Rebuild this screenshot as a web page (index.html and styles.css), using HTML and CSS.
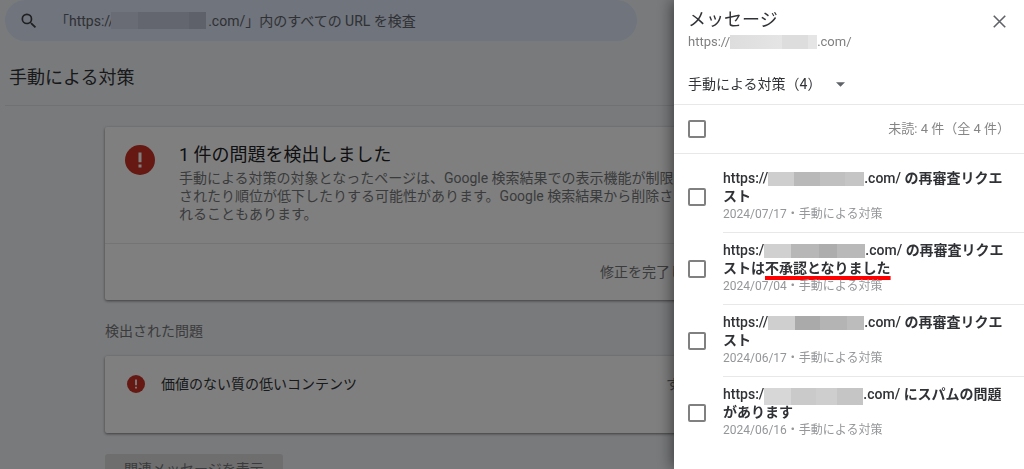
FILE: index.html
```html
<!DOCTYPE html>
<html lang="ja">
<head>
<meta charset="utf-8">
<meta name="viewport" content="width=device-width, initial-scale=1">
<title>手動による対策</title>
<link rel="stylesheet" href="styles.css">
</head>
<body>
<div class="page">
  <form class="search">
    <svg class="search-icon" viewBox="0 0 24 24" aria-hidden="true"><path d="M15.5 14h-.79l-.28-.27A6.47 6.47 0 0 0 16 9.5 6.5 6.5 0 1 0 9.500 16c1.610 0 3.090-.59 4.230-1.570l.27.28v.79l5 4.990L20.490 19zm-6 0a4.500 4.500 0 1 1 0-9 4.500 4.500 0 0 1 0 9z"/></svg>
    <input class="search-input" type="text" aria-label="URL を検査" placeholder="「https://&nbsp;&nbsp;&nbsp;&nbsp;&nbsp;&nbsp;&nbsp;&nbsp;&nbsp;&nbsp;&nbsp;&nbsp;&nbsp;&nbsp;&nbsp;&nbsp;&nbsp;&nbsp;&nbsp;&nbsp;&nbsp;&nbsp;&nbsp;&nbsp;&nbsp;&nbsp;&nbsp;.com/」内のすべての URL を検査">
    <span class="mask mask-search"></span>
  </form>
  <header class="page-head"><h1 class="page-title">手動による対策</h1></header>
  <main class="content">
    <section class="card">
      <div class="summary">
        <svg class="alert-lg" viewBox="0 0 20 20" aria-hidden="true"><circle class="alert-disc" cx="10" cy="10" r="10"/><path class="alert-mark" d="M9 5h2v6.500H9zM9 13h2v2H9z"/></svg>
        <div class="summary-text">
          <h2 class="summary-title">1 件の問題を検出しました</h2>
          <p class="summary-body">手動による対策の対象となったページは、Google 検索結果での表示機能が制限<br>されたり順位が低下したりする可能性があります。Google 検索結果から削除さ<br>れることもあります。</p>
        </div>
      </div>
      <div class="card-actions"><span>修正を完了し</span></div>
    </section>
    <h3 class="section-label">検出された問題</h3>
    <section class="card issue">
      <svg class="alert-sm" viewBox="0 0 20 20" aria-hidden="true"><circle class="alert-disc" cx="10" cy="10" r="10"/><path class="alert-mark" d="M9 5h2v6.500H9zM9 13h2v2H9z"/></svg>
      <span class="issue-name">価値のない質の低いコンテンツ</span>
      <span class="issue-scope">す</span>
    </section>
    <button class="related" type="button">関連メッセージを表示</button>
  </main>
</div>
<div class="scrim"></div>
<aside class="drawer" aria-label="メッセージ">
  <header class="drawer-head">
    <div>
      <h2 class="drawer-title">メッセージ</h2>
      <p class="drawer-url">https://<span class="mask mask-light"></span>.com/</p>
    </div>
    <button class="close" type="button" aria-label="閉じる"><svg class="close-icon" viewBox="0 0 12 12" aria-hidden="true"><path d="M.7.7l10.600 10.600M11.300.7L.7 11.300"/></svg></button>
  </header>
  <div class="filter">
    <select class="filter-select" aria-label="メッセージの種類"><option>手動による対策（4）</option></select>
    <svg class="caret" viewBox="0 0 10 5" aria-hidden="true"><path d="M0 0h10L5 5z"/></svg>
  </div>
  <div class="select-all">
    <input class="check" type="checkbox" aria-label="すべて選択">
    <span class="unread">未読: 4 件（全 4 件）</span>
  </div>
  <ul class="messages">
    <li class="message">
      <input class="check" type="checkbox" id="m1">
      <div class="message-body">
        <label class="message-title" for="m1">https://<span class="mask mask-a"></span>.com/ <b>の再審査リクエ<br>スト</b></label>
        <p class="meta">2024/07/17・手動による対策</p>
      </div>
    </li>
    <li class="message">
      <input class="check" type="checkbox" id="m2">
      <div class="message-body">
        <label class="message-title" for="m2">https:/<span class="mask mask-b"></span>.com/ <b>の再審査リクエ<br>ストは<span class="marked">不承認となりました</span></b></label>
        <p class="meta">2024/07/04・手動による対策</p>
      </div>
    </li>
    <li class="message">
      <input class="check" type="checkbox" id="m3">
      <div class="message-body">
        <label class="message-title" for="m3">https://<span class="mask mask-c"></span>.com/ <b>の再審査リクエ<br>スト</b></label>
        <p class="meta">2024/06/17・手動による対策</p>
      </div>
    </li>
    <li class="message">
      <input class="check" type="checkbox" id="m4">
      <div class="message-body">
        <label class="message-title" for="m4">https:/<span class="mask mask-d"></span>.com/ <b>にスパムの問題<br>があります</b></label>
        <p class="meta">2024/06/16・手動による対策</p>
      </div>
    </li>
  </ul>
</aside>
</body>
</html>
```

FILE: styles.css
```css
* { box-sizing: border-box; }
html, body { height: 100%; }
body {
  margin: 0;
  overflow: hidden;
  background: #f3f5f8;
  color: #303236;
  font: 14px/18px Roboto, "Noto Sans CJK JP", sans-serif;
}
h1, h2, h3, p, ul { margin: 0; padding: 0; font-weight: 400; }
button, input, select { font: inherit; color: inherit; }

.page { padding-left: 5px; white-space: nowrap; }
.search {
  position: relative;
  display: flex;
  align-items: center;
  gap: 16px;
  width: 62%;
  height: 41px;
  padding: 0 14px;
  border-radius: 21px;
  background: #e0e8fa;
}
.search-icon { flex: none; width: 20px; height: 20px; fill: #3c4043; }
.search-input { flex: 1; padding: 0; border: 0; outline: 0; background: none; }
.search-input::placeholder { color: #5f6368; opacity: 1; }
.page-head {
  padding: 24px 4px 14px;
  border-bottom: 1px solid #e0e2e5;
}
.page-title { font-size: 18px; line-height: 26px; }
.content { padding: 21px 320px 0 100px; }
.card {
  border-radius: 2px;
  background: #fff;
  box-shadow: 0 1px 3px rgba(0, 0, 0, .5);
}
.summary {
  display: flex;
  gap: 24px;
  padding: 14px 20px 20px;
  border-bottom: 1px solid #e8e8e8;
}
.alert-lg { flex: none; width: 30px; height: 30px; margin-top: 4px; }
.alert-sm { flex: none; width: 18px; height: 18px; }
.alert-disc { fill: #cb3325; }
.alert-mark { fill: #fff; }
.summary-title { font-size: 18px; line-height: 28px; color: #202124; }
.summary-body { color: #757779; }
.card-actions {
  display: flex;
  justify-content: flex-end;
  padding: 19px 20px;
  color: #757779;
}
.section-label {
  padding: 22px 0 16px;
  font-size: 14px;
  color: #757779;
}
.issue {
  display: flex;
  align-items: flex-start;
  gap: 16px;
  padding: 19px 24px 40px 22px;
}
.issue-scope { margin-left: auto; color: #757779; }
.related {
  margin-top: 21px;
  padding: 6px 19px;
  border: 0;
  border-radius: 3px;
  background: #dcdcdc;
  color: #757779;
}
.scrim { position: fixed; inset: 0; background: rgba(0, 0, 0, .5); }

.drawer {
  position: fixed;
  top: 0;
  right: 0;
  bottom: 0;
  width: 350px;
  background: #fff;
  box-shadow: -2px 0 14px rgba(0, 0, 0, .5);
}
.drawer-head {
  display: flex;
  justify-content: space-between;
  align-items: flex-start;
  padding: 7px 18px 0 14px;
}
.drawer-title { font-size: 18px; line-height: 26px; }
.drawer-url { font-size: 13px; color: #808080; }
.close { display: flex; padding: 8px 0; border: 0; background: none; }
.close-icon { width: 13px; height: 13px; fill: none; stroke: #5f6368; stroke-width: 1.5; }
.filter {
  display: flex;
  align-items: center;
  gap: 14px;
  padding: 24px 14px 11px;
  border-bottom: 1px solid #e8e8e8;
}
.filter-select {
  appearance: none;
  padding: 0;
  border: 0;
  background: none;
}
.caret { width: 9px; height: 5px; fill: #5f6368; }
.select-all {
  display: flex;
  align-items: center;
  justify-content: space-between;
  padding: 15px 14px;
  border-bottom: 1px solid #e8e8e8;
}
.unread { font-size: 13px; color: #858585; }
.check {
  appearance: none;
  flex: none;
  width: 18px;
  height: 18px;
  margin: 0;
  border: 2px solid #808080;
  border-radius: 2px;
  background: #fff;
}
.messages { padding-top: 7px; list-style: none; }
.message {
  display: flex;
  align-items: center;
  gap: 17px;
  padding-left: 14px;
}
.message-body {
  flex: 1;
  padding: 8px 0 9px;
  border-bottom: 1px solid #e8e8e8;
  white-space: nowrap;
}
.message:last-child .message-body { border-color: transparent; }
.message-title { display: block; font-weight: 500; }
.meta { font-size: 12px; color: #949699; }
.marked {
  text-decoration: underline 4px #f00;
  text-underline-offset: 3px;
  text-decoration-skip-ink: none;
}

.mask { display: inline-block; height: 14px; vertical-align: -3px; }
.mask-search {
  position: absolute;
  left: 106px;
  top: 12px;
  width: 95px;
  height: 17px;
  background: linear-gradient(90deg, #d2d9e9 28%, #c6cddc 28% 82%, #bcc3d2 82%);
}
.mask-light { width: 87px; background: linear-gradient(90deg, #ddd, #e5e5e5 60%, #ddd 60% 90%, #e5e5e5 90%); }
.mask-a { width: 96px; background: linear-gradient(90deg, #cecece 27%, #b9b9b9 27% 54%, #c0c0c0 54% 80%, #c5c5c5 80%); }
.mask-b { width: 101px; background: linear-gradient(90deg, #d0d0d0 27%, #b7b7b7 27% 54%, #adadad 54% 72%, #b9b9b9 72%); }
.mask-c { width: 96px; background: linear-gradient(90deg, #cfcfcf 28%, #aaa 28% 54%, #b4b4b4 54% 82%, #bcbcbc 82%); }
.mask-d { width: 99px; height: 17px; margin: -3px 0; background: linear-gradient(90deg, #d7d7d7 27%, #cacaca 27% 53%, #cecece 53% 74%, #c5c5c5 74%); }
```
